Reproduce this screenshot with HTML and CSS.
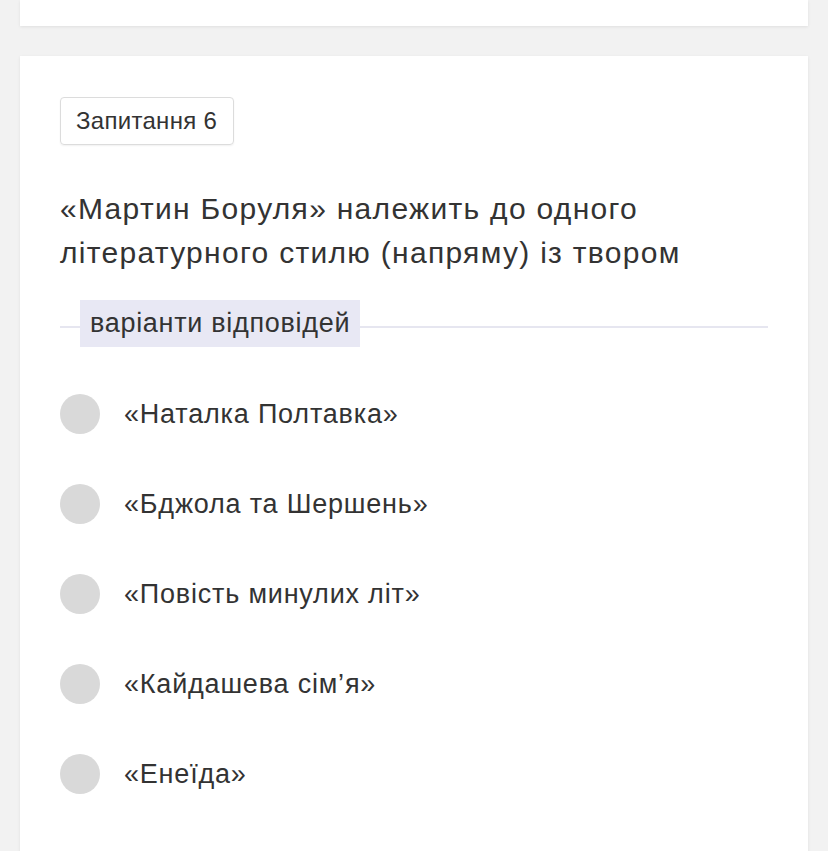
FILE: index.html
```html
<!DOCTYPE html>
<html lang="uk">
<head>
<meta charset="utf-8">
<link rel="stylesheet" href="styles.css">
</head>
<body>
<div class="page">
  <div class="card card-prev"></div>
  <div class="card card-main">
    <div class="badge">Запитання 6</div>
    <div class="question">«Мартин Боруля» належить до одного літературного стилю (напряму) із твором</div>
    <div class="divider"><span class="divider-label">варіанти відповідей</span></div>
    <ul class="options">
      <li class="option"><span class="radio"></span><span class="option-text">«Наталка Полтавка»</span></li>
      <li class="option"><span class="radio"></span><span class="option-text">«Бджола та Шершень»</span></li>
      <li class="option"><span class="radio"></span><span class="option-text">«Повість минулих літ»</span></li>
      <li class="option"><span class="radio"></span><span class="option-text">«Кайдашева сім’я»</span></li>
      <li class="option"><span class="radio"></span><span class="option-text">«Енеїда»</span></li>
    </ul>
  </div>
</div>
</body>
</html>
```

FILE: styles.css
```css
html, body {
  margin: 0;
  padding: 0;
  background: #f2f2f2;
  font-family: "Liberation Sans", Arial, sans-serif;
  color: #333;
}
.page {
  padding: 0 20px;
  height: 851px;
  overflow: hidden;
}
.card {
  background: #fff;
  box-shadow: 0 1px 3px rgba(0,0,0,0.08);
}
.card-prev {
  height: 26px;
  margin-bottom: 30px;
}
.card-main {
  padding: 41px 40px 60px 40px;
}
.badge {
  display: inline-block;
  border: 1px solid #dcdcdc;
  border-radius: 4px;
  padding: 10px 16px 10px 15px;
  font-size: 24px;
  line-height: 26px;
  letter-spacing: 0.3px;
  box-shadow: 0 1px 2px rgba(0,0,0,0.06);
}
.question {
  margin-top: 42px;
  font-size: 30px;
  line-height: 44px;
  letter-spacing: 1.3px;
}
.divider {
  margin-top: 25px;
  display: flex;
  align-items: center;
  height: 47px;
  padding-left: 20px;
  background: linear-gradient(#e6e6f0, #e6e6f0) 0 26px / 100% 2px no-repeat;
}
.divider-label {
  background: #e8e8f4;
  font-size: 27px;
  line-height: 47px;
  letter-spacing: 0.7px;
  padding: 0 10px;
}
.options {
  list-style: none;
  margin: 47px 0 0 0;
  padding: 0;
  display: flex;
  flex-direction: column;
  gap: 50px;
}
.option {
  display: flex;
  align-items: center;
  height: 40px;
}
.radio {
  width: 40px;
  height: 40px;
  border-radius: 50%;
  background: #d9d9d9;
  flex: none;
}
.option-text {
  margin-left: 24px;
  font-size: 27px;
  letter-spacing: 0.8px;
}
```
